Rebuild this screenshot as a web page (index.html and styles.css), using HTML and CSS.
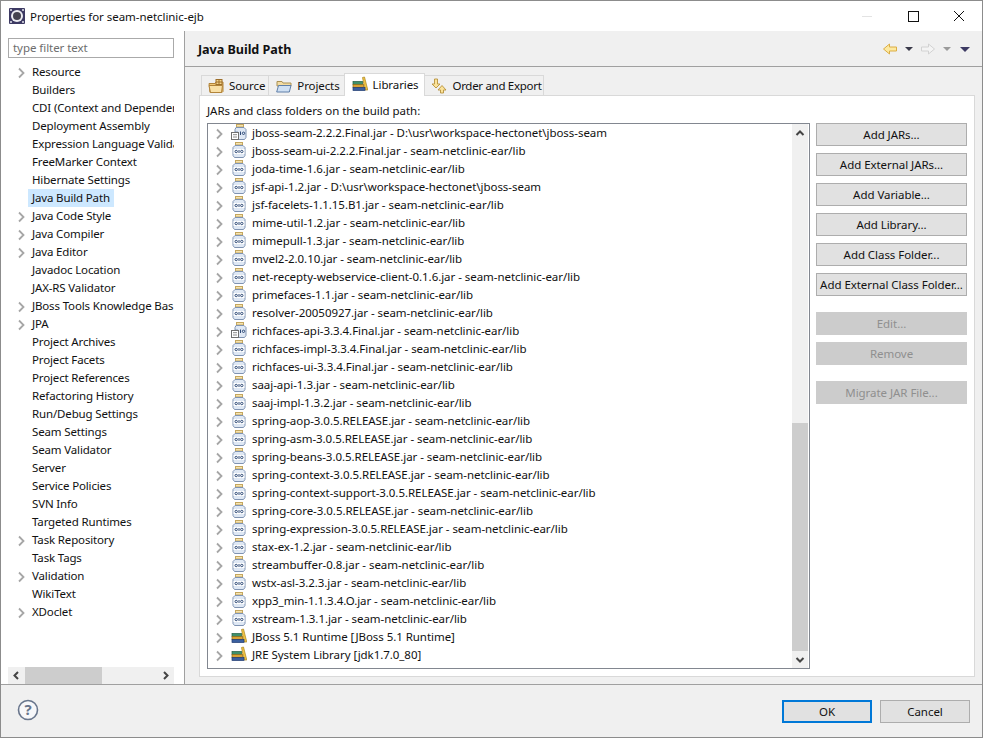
FILE: index.html
```html
<!DOCTYPE html>
<html lang="en">
<head>
<meta charset="UTF-8">
<title>Properties for seam-netclinic-ejb</title>
<link rel="stylesheet" href="styles.css">
</head>
<body>

<!-- shared icons -->
<svg class="defs" width="0" height="0">
  <symbol id="chev" viewBox="0 0 9 12"><path d="M2 1.500 6.500 6 2 10.500" fill="none" stroke="#a6a6a6" stroke-width="1.800"/></symbol>
  <symbol id="jar" viewBox="0 0 16 16">
    <rect x="4.500" y="0.500" width="7" height="2.500" fill="#f6e3ae" stroke="#c4a65e"/>
    <path d="M4 3.500h8l2 2v8l-1.500 2h-9L2 13.500v-8z" fill="#dfe8f4" stroke="#7f93b2"/>
    <rect x="2.500" y="7" width="11" height="5" fill="#fff"/>
    <circle cx="5.200" cy="9.500" r="1.200" fill="none" stroke="#2f4b78"/>
    <path d="M8 8v3" stroke="#2f4b78"/>
    <circle cx="10.800" cy="9.500" r="1.200" fill="none" stroke="#2f4b78"/>
  </symbol>
  <symbol id="srcjar" viewBox="0 0 16 16">
    <rect x="5.500" y="0.500" width="7" height="2.500" fill="#f6e3ae" stroke="#c4a65e"/>
    <path d="M5 3.500h8l2 2v8l-1.500 2H7V8H4V5.500z" fill="#dfe8f4" stroke="#7f93b2"/>
    <rect x="0.500" y="8.500" width="7" height="7" fill="#fff" stroke="#6f6f6f"/>
    <path d="M2 10.700h4M2 13h4" stroke="#8a8a8a"/>
    <path d="M9.500 7.500v3.500" stroke="#2f4b78"/>
    <circle cx="12.500" cy="9.300" r="1.200" fill="none" stroke="#2f4b78"/>
  </symbol>
  <symbol id="lib" viewBox="0 0 16 16">
    <path d="M10.500 1.500 12.500 1 15.800 14H13z" fill="#f2c544" stroke="#a8821f" stroke-width=".700"/>
    <rect x="1" y="5.500" width="9.500" height="3" fill="#3f8f6a" stroke="#1f5f44" stroke-width=".700"/>
    <rect x="1" y="8.500" width="10.500" height="3" fill="#d9a233" stroke="#8f6a18" stroke-width=".700"/>
    <rect x="1" y="11.500" width="12" height="3" fill="#3a5f9f" stroke="#1f3a6f" stroke-width=".700"/>
  </symbol>
  <symbol id="srcfolder" viewBox="0 0 16 16">
    <path d="M1 5.500h6l1-1.500h7v9.500l-1 1H2z" fill="#f0c878" stroke="#b2843a"/>
    <path d="M1 7.500h13.500l-1 7H2.500z" fill="#f9e0a6" stroke="#b2843a"/>
    <rect x="8" y="1.500" width="6" height="5" fill="#f5d68c" stroke="#9d6f2a"/>
    <path d="M11 1.500v5M8 4h6" stroke="#9d6f2a"/>
  </symbol>
  <symbol id="prjfolder" viewBox="0 0 16 16">
    <path d="M1 3.500h5l1 1.500h8v3H1z" fill="#f3dca2" stroke="#a99055"/>
    <path d="M.7 14 2.500 7.500H15L13.300 14z" fill="#cfe0f3" stroke="#5f7fa8"/>
  </symbol>
</svg>

<div class="window">

  <div class="titlebar">
    <svg class="app-icon" width="16" height="16" viewBox="0 0 16 16">
      <rect width="16" height="16" rx="1" fill="#3d3a63"/>
      <circle cx="8" cy="8" r="6" fill="#ececf1"/>
      <circle cx="8" cy="8" r="4" fill="#45434f"/>
      <path d="M1 1h2v2H1zM13 1h2v2h-2zM1 13h2v2H1zM13 13h2v2h-2z" fill="#b9b9c9"/>
    </svg>
    <span class="title">Properties for seam-netclinic-ejb</span>
    <div class="winbtns">
      <svg width="46" height="30" viewBox="0 0 46 30"><path d="M18 15.500h10" stroke="#e3e3e3"/></svg>
      <svg width="46" height="30" viewBox="0 0 46 30"><rect x="18.500" y="10.500" width="10" height="10" fill="none" stroke="#111"/></svg>
      <svg width="46" height="30" viewBox="0 0 46 30"><path d="M18 10l10 10M28 10 18 20" stroke="#111" fill="none"/></svg>
    </div>
  </div>

  <div class="main">
    <div class="sidebar">
      <div class="filter">type filter text</div>
      <div class="nav">
        <div class="nav-item"><svg class="chev"><use href="#chev"/></svg><span>Resource</span></div>
        <div class="nav-item"><span>Builders</span></div>
        <div class="nav-item"><span>CDI (Context and Dependen</span></div>
        <div class="nav-item"><span>Deployment Assembly</span></div>
        <div class="nav-item"><span>Expression Language Valida</span></div>
        <div class="nav-item"><span>FreeMarker Context</span></div>
        <div class="nav-item"><span>Hibernate Settings</span></div>
        <div class="nav-item"><span class="selected">Java Build Path</span></div>
        <div class="nav-item"><svg class="chev"><use href="#chev"/></svg><span>Java Code Style</span></div>
        <div class="nav-item"><svg class="chev"><use href="#chev"/></svg><span>Java Compiler</span></div>
        <div class="nav-item"><svg class="chev"><use href="#chev"/></svg><span>Java Editor</span></div>
        <div class="nav-item"><span>Javadoc Location</span></div>
        <div class="nav-item"><span>JAX-RS Validator</span></div>
        <div class="nav-item"><svg class="chev"><use href="#chev"/></svg><span>JBoss Tools Knowledge Bas</span></div>
        <div class="nav-item"><svg class="chev"><use href="#chev"/></svg><span>JPA</span></div>
        <div class="nav-item"><span>Project Archives</span></div>
        <div class="nav-item"><span>Project Facets</span></div>
        <div class="nav-item"><span>Project References</span></div>
        <div class="nav-item"><span>Refactoring History</span></div>
        <div class="nav-item"><span>Run/Debug Settings</span></div>
        <div class="nav-item"><span>Seam Settings</span></div>
        <div class="nav-item"><span>Seam Validator</span></div>
        <div class="nav-item"><span>Server</span></div>
        <div class="nav-item"><span>Service Policies</span></div>
        <div class="nav-item"><span>SVN Info</span></div>
        <div class="nav-item"><span>Targeted Runtimes</span></div>
        <div class="nav-item"><svg class="chev"><use href="#chev"/></svg><span>Task Repository</span></div>
        <div class="nav-item"><span>Task Tags</span></div>
        <div class="nav-item"><svg class="chev"><use href="#chev"/></svg><span>Validation</span></div>
        <div class="nav-item"><span>WikiText</span></div>
        <div class="nav-item"><svg class="chev"><use href="#chev"/></svg><span>XDoclet</span></div>
      </div>
      <div class="hscroll">
        <svg class="arrow" width="17" height="17" viewBox="0 0 17 17"><path d="M10 5 6.500 8.500 10 12" fill="none" stroke="#444" stroke-width="2"/></svg>
        <div class="hthumb"></div>
        <svg class="arrow" width="17" height="17" viewBox="0 0 17 17"><path d="M7 5 10.500 8.500 7 12" fill="none" stroke="#444" stroke-width="2"/></svg>
      </div>
    </div>

    <div class="content">
      <div class="page-head">
        <h1>Java Build Path</h1>
        <div class="history">
          <svg width="16" height="16" viewBox="0 0 16 16"><path d="M1.500 8 7.500 3v3h7v4h-7v3z" fill="#fde9a0" stroke="#dcae45"/></svg>
          <svg width="8" height="4" viewBox="0 0 8 4"><path d="M0 0h8L4 4z" fill="#3a3a4a"/></svg>
          <svg width="16" height="16" viewBox="0 0 16 16"><path d="M14.500 8 8.500 3v3h-7v4h7v3z" fill="#f4f4f4" stroke="#d2d2d2"/></svg>
          <svg width="8" height="4" viewBox="0 0 8 4"><path d="M0 0h8L4 4z" fill="#9a9a9a"/></svg>
          <svg class="gap" width="10" height="5" viewBox="0 0 10 5"><path d="M0 0h10L5 5z" fill="#3d3a63"/></svg>
        </div>
      </div>

      <div class="tabs-area">
        <div class="tabs">
          <div class="tab tab-source"><svg class="ico"><use href="#srcfolder"/></svg>Source</div>
          <div class="tab tab-projects"><svg class="ico"><use href="#prjfolder"/></svg>Projects</div>
          <div class="tab active"><svg class="ico"><use href="#lib"/></svg>Libraries</div>
          <div class="tab tab-order">
            <svg class="ico" viewBox="0 0 16 16"><path d="M3.500 1v5H1l4 4 4-4H6.500V1z" fill="#fbe39a" stroke="#b8923c" stroke-width=".900"/><path d="M9.500 15v-3H7l4-4.500 4 4.500h-2.500v3z" fill="#fbe39a" stroke="#b8923c" stroke-width=".900"/></svg>
            Order and Export
          </div>
        </div>

        <div class="tab-panel">
          <div class="panel-label">JARs and class folders on the build path:</div>
          <div class="panel-body">
            <div class="list">
              <div class="rows">
                <div class="row"><svg class="chev"><use href="#chev"/></svg><svg class="ico"><use href="#srcjar"/></svg>jboss-seam-2.2.2.Final.jar - D:\usr\workspace-hectonet\jboss-seam</div>
                <div class="row"><svg class="chev"><use href="#chev"/></svg><svg class="ico"><use href="#jar"/></svg>jboss-seam-ui-2.2.2.Final.jar - seam-netclinic-ear/lib</div>
                <div class="row"><svg class="chev"><use href="#chev"/></svg><svg class="ico"><use href="#jar"/></svg>joda-time-1.6.jar - seam-netclinic-ear/lib</div>
                <div class="row"><svg class="chev"><use href="#chev"/></svg><svg class="ico"><use href="#jar"/></svg>jsf-api-1.2.jar - D:\usr\workspace-hectonet\jboss-seam</div>
                <div class="row"><svg class="chev"><use href="#chev"/></svg><svg class="ico"><use href="#jar"/></svg>jsf-facelets-1.1.15.B1.jar - seam-netclinic-ear/lib</div>
                <div class="row"><svg class="chev"><use href="#chev"/></svg><svg class="ico"><use href="#jar"/></svg>mime-util-1.2.jar - seam-netclinic-ear/lib</div>
                <div class="row"><svg class="chev"><use href="#chev"/></svg><svg class="ico"><use href="#jar"/></svg>mimepull-1.3.jar - seam-netclinic-ear/lib</div>
                <div class="row"><svg class="chev"><use href="#chev"/></svg><svg class="ico"><use href="#jar"/></svg>mvel2-2.0.10.jar - seam-netclinic-ear/lib</div>
                <div class="row"><svg class="chev"><use href="#chev"/></svg><svg class="ico"><use href="#jar"/></svg>net-recepty-webservice-client-0.1.6.jar - seam-netclinic-ear/lib</div>
                <div class="row"><svg class="chev"><use href="#chev"/></svg><svg class="ico"><use href="#jar"/></svg>primefaces-1.1.jar - seam-netclinic-ear/lib</div>
                <div class="row"><svg class="chev"><use href="#chev"/></svg><svg class="ico"><use href="#jar"/></svg>resolver-20050927.jar - seam-netclinic-ear/lib</div>
                <div class="row"><svg class="chev"><use href="#chev"/></svg><svg class="ico"><use href="#srcjar"/></svg>richfaces-api-3.3.4.Final.jar - seam-netclinic-ear/lib</div>
                <div class="row"><svg class="chev"><use href="#chev"/></svg><svg class="ico"><use href="#jar"/></svg>richfaces-impl-3.3.4.Final.jar - seam-netclinic-ear/lib</div>
                <div class="row"><svg class="chev"><use href="#chev"/></svg><svg class="ico"><use href="#jar"/></svg>richfaces-ui-3.3.4.Final.jar - seam-netclinic-ear/lib</div>
                <div class="row"><svg class="chev"><use href="#chev"/></svg><svg class="ico"><use href="#jar"/></svg>saaj-api-1.3.jar - seam-netclinic-ear/lib</div>
                <div class="row"><svg class="chev"><use href="#chev"/></svg><svg class="ico"><use href="#jar"/></svg>saaj-impl-1.3.2.jar - seam-netclinic-ear/lib</div>
                <div class="row"><svg class="chev"><use href="#chev"/></svg><svg class="ico"><use href="#jar"/></svg>spring-aop-3.0.5.RELEASE.jar - seam-netclinic-ear/lib</div>
                <div class="row"><svg class="chev"><use href="#chev"/></svg><svg class="ico"><use href="#jar"/></svg>spring-asm-3.0.5.RELEASE.jar - seam-netclinic-ear/lib</div>
                <div class="row"><svg class="chev"><use href="#chev"/></svg><svg class="ico"><use href="#jar"/></svg>spring-beans-3.0.5.RELEASE.jar - seam-netclinic-ear/lib</div>
                <div class="row"><svg class="chev"><use href="#chev"/></svg><svg class="ico"><use href="#jar"/></svg>spring-context-3.0.5.RELEASE.jar - seam-netclinic-ear/lib</div>
                <div class="row"><svg class="chev"><use href="#chev"/></svg><svg class="ico"><use href="#jar"/></svg>spring-context-support-3.0.5.RELEASE.jar - seam-netclinic-ear/lib</div>
                <div class="row"><svg class="chev"><use href="#chev"/></svg><svg class="ico"><use href="#jar"/></svg>spring-core-3.0.5.RELEASE.jar - seam-netclinic-ear/lib</div>
                <div class="row"><svg class="chev"><use href="#chev"/></svg><svg class="ico"><use href="#jar"/></svg>spring-expression-3.0.5.RELEASE.jar - seam-netclinic-ear/lib</div>
                <div class="row"><svg class="chev"><use href="#chev"/></svg><svg class="ico"><use href="#jar"/></svg>stax-ex-1.2.jar - seam-netclinic-ear/lib</div>
                <div class="row"><svg class="chev"><use href="#chev"/></svg><svg class="ico"><use href="#jar"/></svg>streambuffer-0.8.jar - seam-netclinic-ear/lib</div>
                <div class="row"><svg class="chev"><use href="#chev"/></svg><svg class="ico"><use href="#jar"/></svg>wstx-asl-3.2.3.jar - seam-netclinic-ear/lib</div>
                <div class="row"><svg class="chev"><use href="#chev"/></svg><svg class="ico"><use href="#jar"/></svg>xpp3_min-1.1.3.4.O.jar - seam-netclinic-ear/lib</div>
                <div class="row"><svg class="chev"><use href="#chev"/></svg><svg class="ico"><use href="#jar"/></svg>xstream-1.3.1.jar - seam-netclinic-ear/lib</div>
                <div class="row"><svg class="chev"><use href="#chev"/></svg><svg class="ico"><use href="#lib"/></svg>JBoss 5.1 Runtime [JBoss 5.1 Runtime]</div>
                <div class="row"><svg class="chev"><use href="#chev"/></svg><svg class="ico"><use href="#lib"/></svg>JRE System Library [jdk1.7.0_80]</div>
              </div>
              <div class="vscroll">
                <svg class="arrow" width="16" height="17" viewBox="0 0 16 17"><path d="M4.500 11 8 7.500l3.500 3.500" fill="none" stroke="#444" stroke-width="2"/></svg>
                <div class="vspace"></div>
                <div class="vthumb"></div>
                <svg class="arrow" width="16" height="17" viewBox="0 0 16 17"><path d="M4.500 7 8 10.500 11.500 7" fill="none" stroke="#444" stroke-width="2"/></svg>
              </div>
            </div>

            <div class="buttons">
              <button class="btn">Add JARs...</button>
              <button class="btn">Add External JARs...</button>
              <button class="btn">Add Variable...</button>
              <button class="btn">Add Library...</button>
              <button class="btn">Add Class Folder...</button>
              <button class="btn">Add External Class Folder...</button>
              <button class="btn off first-off">Edit...</button>
              <button class="btn off">Remove</button>
              <button class="btn off migrate">Migrate JAR File...</button>
            </div>
          </div>
        </div>
      </div>
    </div>
  </div>

  <div class="footer">
    <svg class="help" width="22" height="22" viewBox="0 0 22 22">
      <circle cx="11" cy="11" r="9.500" fill="#f7f7f9" stroke="#68758c" stroke-width="1.600"/>
      <text x="11" y="16" text-anchor="middle" class="help-mark">?</text>
    </svg>
    <div class="footer-btns">
      <button class="btn dlg default">OK</button>
      <button class="btn dlg">Cancel</button>
    </div>
  </div>
</div>

</body>
</html>
```
FILE: styles.css
```css
* {
  box-sizing: border-box;
}

body {
  margin: 0;
  font-family: "Noto Sans", "Open Sans", sans-serif;
  font-size: 11.5px;
  letter-spacing: -0.05px;
  color: #111;
  background-color: #fff;
}

.defs {
  display: block;
  height: 0;
}

.window {
  width: 983px;
  height: 738px;
  border: 1px solid #8c8c8c;
  display: flex;
  flex-direction: column;
  background-color: #fff;
}

.titlebar {
  height: 30px;
  flex: none;
  display: flex;
  align-items: center;
  padding-left: 8px;
}

.title {
  margin-left: 5px;
}

.winbtns {
  margin-left: auto;
  display: flex;
}

.winbtns svg {
  display: block;
}

.main {
  flex: 1;
  min-height: 0;
  display: flex;
}

/* left tree */
.sidebar {
  width: 184px;
  flex: none;
  border-right: 1px solid #a0a0a0;
  display: flex;
  flex-direction: column;
  padding: 7px 10px 0 7px;
}

.filter {
  height: 20px;
  flex: none;
  border: 1px solid #aaa;
  padding-left: 4px;
  line-height: 17px;
  color: #6d6d6d;
}

.nav {
  flex: 1;
  min-height: 0;
  margin-top: 5px;
  overflow: hidden;
  letter-spacing: -0.15px;
}

.nav-item {
  height: 18px;
  display: flex;
  align-items: center;
  white-space: nowrap;
  padding-left: 23px;
  position: relative;
}

.nav-item .chev {
  position: absolute;
  left: 9px;
  top: 4px;
}

.nav-item span {
  display: block;
  padding: 0 1px;
  line-height: 18px;
}

.nav-item .selected {
  background-color: #cde8ff;
  margin-left: -3px;
  padding: 0 4px;
}

.chev {
  width: 9px;
  height: 12px;
  flex: none;
}

.hscroll {
  height: 17px;
  flex: none;
  background-color: #f0f0f0;
  display: flex;
  align-items: center;
}

.hthumb {
  width: 77px;
  height: 17px;
  background-color: #cdcdcd;
}

.hscroll .arrow:last-child {
  margin-left: auto;
}

/* right side */
.content {
  flex: 1;
  min-width: 0;
  background-color: #f0f0f0;
  display: flex;
  flex-direction: column;
}

.page-head {
  height: 36px;
  flex: none;
  border-bottom: 1px solid #a0a0a0;
  display: flex;
  align-items: center;
  padding: 1px 12px 0 13px;
}

h1 {
  margin: 1px 0 0;
  font-size: 12.6px;
  font-weight: 700;
}

.history {
  margin-left: auto;
  display: flex;
  align-items: center;
  gap: 7px;
}

.history .gap {
  margin-left: 2px;
}

.tabs-area {
  flex: 1;
  min-height: 0;
  padding: 6px 7px 7px 14px;
  display: flex;
  flex-direction: column;
}

.tabs {
  display: flex;
  height: 22px;
  flex: none;
  align-items: flex-end;
  padding-left: 3px;
}

.tab {
  height: 20px;
  display: flex;
  align-items: center;
  gap: 5px;
  padding: 0 4px 0 6px;
  background-color: #f0f0f0;
  border: 1px solid #d9d9d9;
  border-bottom: none;
  margin-left: -1px;
  letter-spacing: -0.1px;
}

.tab-source {
  padding-right: 3px;
}

.tab-projects {
  padding: 0 4px 0 7px;
}

.tab-order {
  letter-spacing: -0.3px;
  padding-right: 2px;
}

.tab.active {
  height: 23px;
  background-color: #fff;
  margin-bottom: -1px;
  padding: 0 6px 2px 7px;
  position: relative;
}

.ico {
  width: 16px;
  height: 16px;
  flex: none;
}

.tab-panel {
  flex: 1;
  min-height: 0;
  background-color: #fff;
  border: 1px solid #d9d9d9;
  padding: 6px 7px 7px 7px;
  display: flex;
  flex-direction: column;
}

.panel-label {
  height: 21px;
  flex: none;
  line-height: 18px;
}

.panel-body {
  flex: 1;
  min-height: 0;
  display: flex;
  gap: 6px;
}

.list {
  width: 603px;
  flex: none;
  border: 1px solid #828790;
  display: flex;
  padding: 0 1px;
}

.rows {
  flex: 1;
  min-width: 0;
  overflow: hidden;
}

.row {
  height: 18px;
  display: flex;
  align-items: center;
  gap: 5px;
  padding: 0 0 2px 6px;
  white-space: nowrap;
}

.row .chev {
  margin: 3px 2px 0 0;
}

.vscroll {
  width: 16px;
  flex: none;
  background-color: #f0f0f0;
  display: flex;
  flex-direction: column;
}

.vscroll .arrow {
  display: block;
  flex: none;
}

.vspace {
  flex: 1;
}

.vthumb {
  height: 228px;
  flex: none;
  background-color: #cdcdcd;
}

/* buttons */
.buttons {
  display: flex;
  flex-direction: column;
  gap: 7px;
  width: 151px;
  flex: none;
}

.btn {
  height: 23px;
  padding: 0;
  font: inherit;
  letter-spacing: inherit;
  white-space: nowrap;
  color: #111;
  background-color: #e1e1e1;
  border: 1px solid #adadad;
}

.btn.off {
  background-color: #ccc;
  border-color: #ccc;
  color: #8f8f8f;
}

.first-off {
  margin-top: 9px;
}

.migrate {
  margin-top: 9px;
}

.footer {
  height: 53px;
  flex: none;
  background-color: #f0f0f0;
  border-top: 1px solid #a0a0a0;
  display: flex;
  align-items: flex-start;
  padding: 14px 12px 0 16px;
}

.help-mark {
  font-size: 15px;
  font-weight: 700;
  fill: #68758c;
}

.footer-btns {
  margin-left: auto;
  display: flex;
  gap: 8px;
  padding-top: 1px;
}

.dlg {
  width: 90px;
}

.default {
  border: 2px solid #0078d7;
}
```
